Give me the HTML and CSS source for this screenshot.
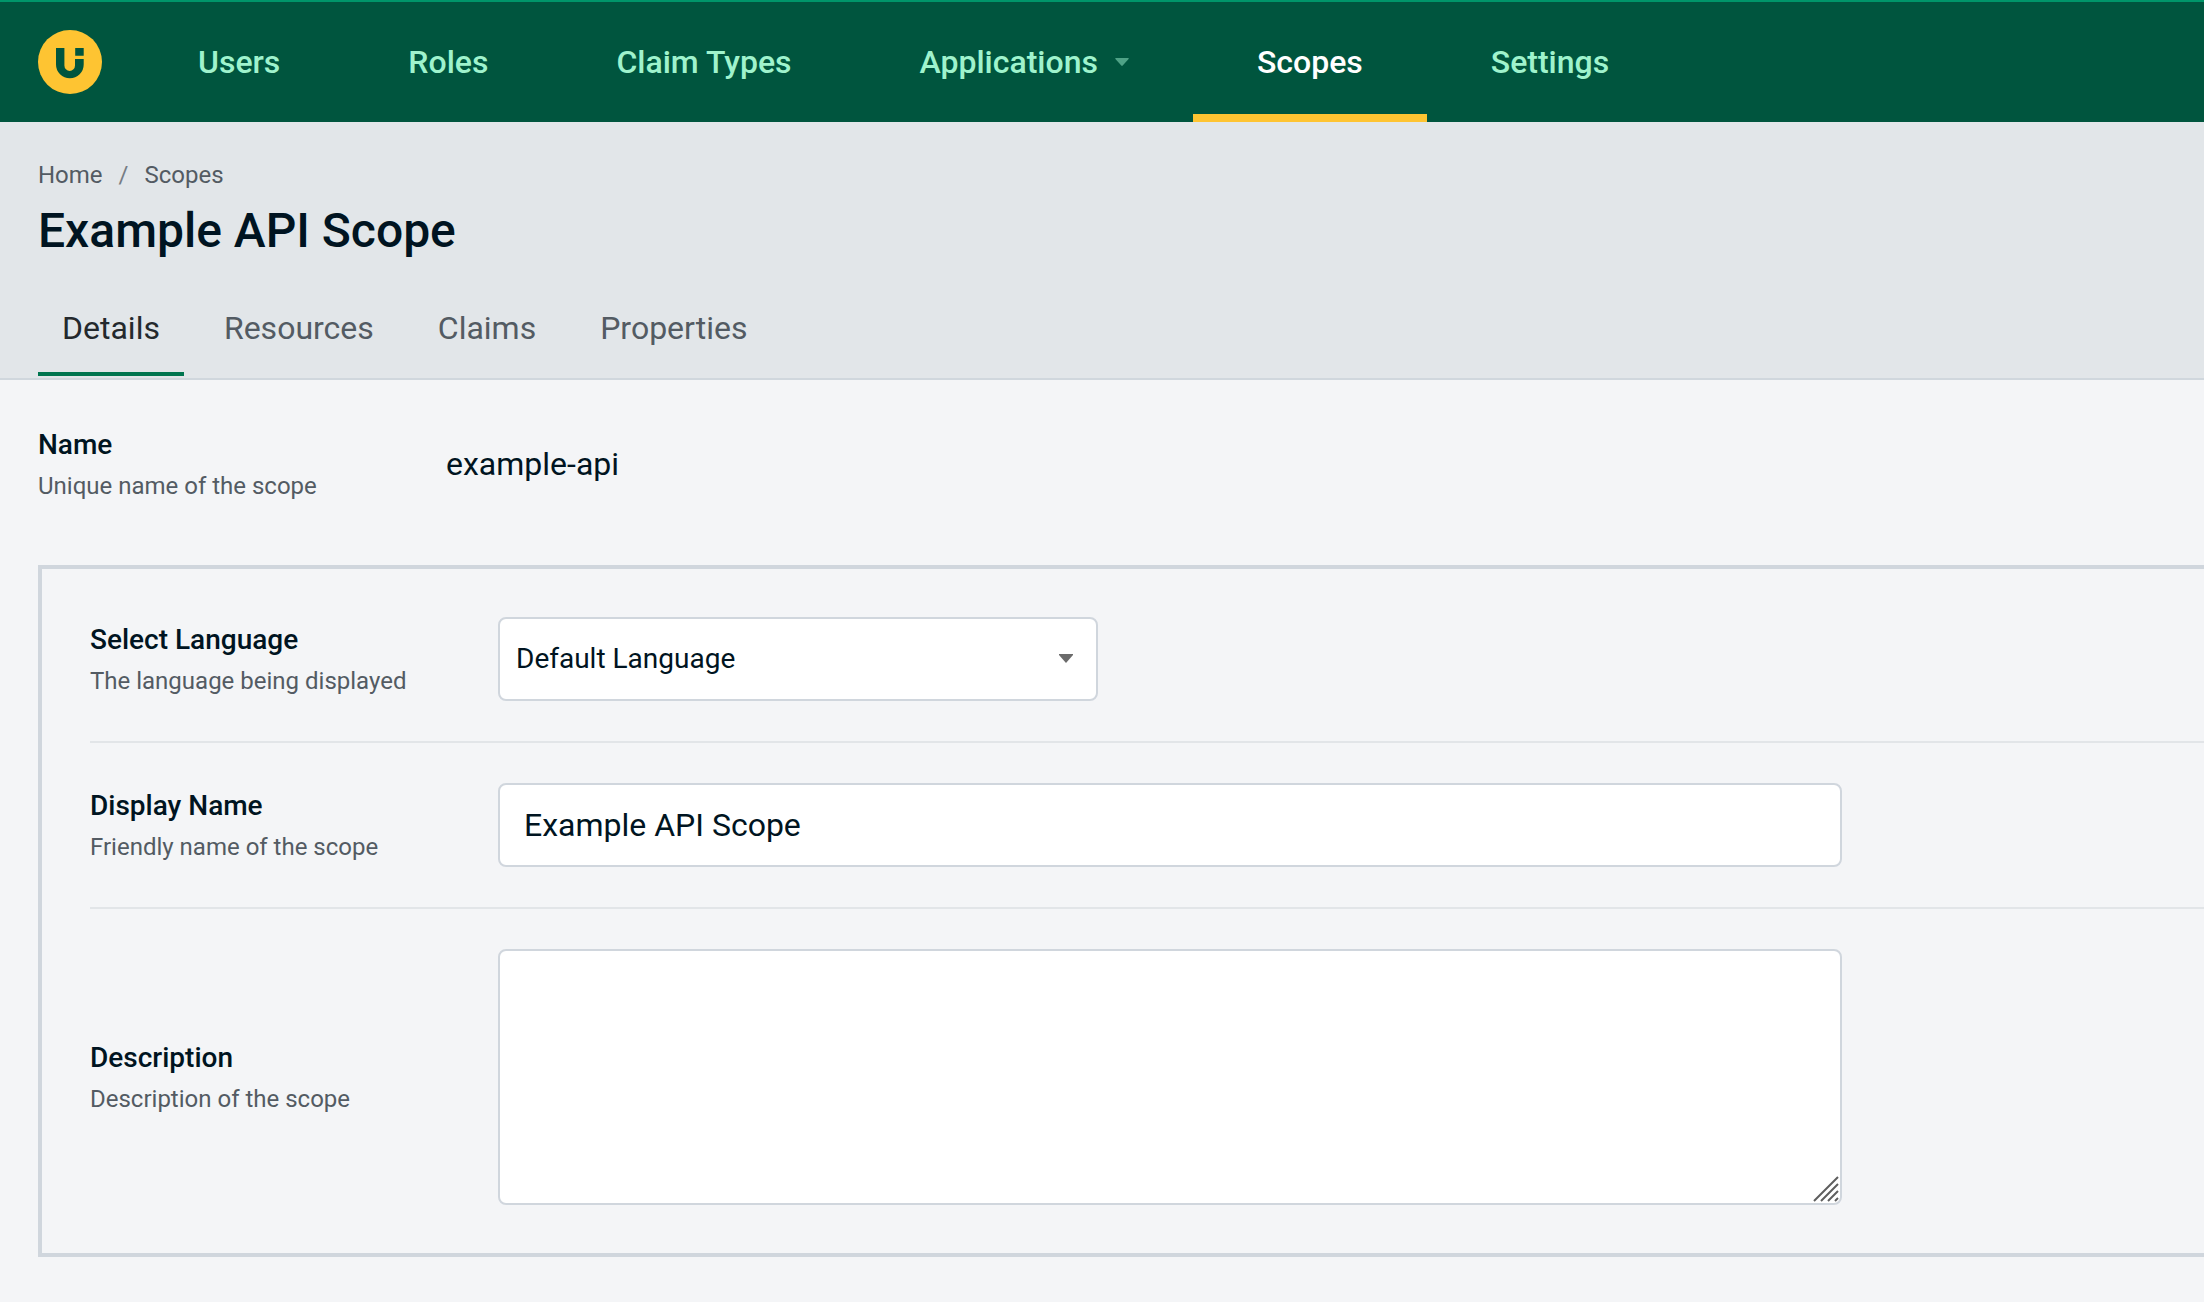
FILE: index.html
```html
<!DOCTYPE html>
<html lang="en">
<head>
<meta charset="utf-8">
<meta name="viewport" content="width=device-width, initial-scale=1">
<title>Example API Scope</title>
<link rel="stylesheet" href="styles.css">
</head>
<body>
<header class="topbar">
  <a class="logo" href="#" aria-label="Home">
    <svg viewBox="0 0 64 64" width="64" height="64" aria-hidden="true">
      <circle class="logo-disc" cx="32" cy="32" r="32"/>
      <path class="logo-mark" d="M18 18h8.4v17.6a5.3 5.3 0 0 0 10.6 0V29h8.7v5.4a13.85 13.85 0 0 1-27.7 0zM37.2 18h8.5v7.7h-8.5z"/>
    </svg>
  </a>
  <nav class="nav" aria-label="Main">
    <a class="nav-link" href="#">Users</a>
    <a class="nav-link" href="#">Roles</a>
    <a class="nav-link" href="#">Claim Types</a>
    <a class="nav-link nav-link-menu" href="#">Applications
      <svg class="nav-caret" viewBox="0 0 14 8" width="14" height="8" aria-hidden="true"><path d="M1 0h12q1.500 0 .6 1L7.700 7.600q-.7.700-1.400 0L.4 1Q-.5 0 1 0z"/></svg>
    </a>
    <a class="nav-link nav-link-active" href="#" aria-current="page">Scopes</a>
    <a class="nav-link" href="#">Settings</a>
  </nav>
</header>

<section class="page-head">
  <nav class="crumbs" aria-label="Breadcrumb">
    <a href="#">Home</a>
    <span class="crumb-sep">/</span>
    <a href="#">Scopes</a>
  </nav>
  <h1 class="title">Example API Scope</h1>
  <nav class="tabs" aria-label="Scope sections">
    <a class="tab tab-active" href="#">Details</a>
    <a class="tab" href="#">Resources</a>
    <a class="tab" href="#">Claims</a>
    <a class="tab" href="#">Properties</a>
  </nav>
</section>

<main class="content">
  <div class="row">
    <div class="caption">
      <span class="label">Name</span>
      <span class="hint">Unique name of the scope</span>
    </div>
    <output class="value">example-api</output>
  </div>

  <form class="panel">
    <div class="row">
      <div class="caption">
        <label class="label" for="language">Select Language</label>
        <span class="hint">The language being displayed</span>
      </div>
      <div class="select-wrap">
        <select class="control select" id="language">
          <option>Default Language</option>
        </select>
        <svg class="select-caret" viewBox="0 0 14 9" width="14" height="9" aria-hidden="true"><path d="M0 0h14v1L7 9 0 1z"/></svg>
      </div>
    </div>
    <div class="row">
      <div class="caption">
        <label class="label" for="display-name">Display Name</label>
        <span class="hint">Friendly name of the scope</span>
      </div>
      <div class="field">
        <input class="control" id="display-name" type="text" value="Example API Scope">
      </div>
    </div>
    <div class="row">
      <div class="caption">
        <label class="label" for="description">Description</label>
        <span class="hint">Description of the scope</span>
      </div>
      <div class="field">
        <textarea class="control textarea" id="description"></textarea>
        <svg class="grip" viewBox="0 0 26 26" width="26" height="26" aria-hidden="true"><path d="M1 25 25 1M8 25 25 8M15 25 25 15M22 25l3-3"/></svg>
      </div>
    </div>
  </form>
</main>
</body>
</html>
```

FILE: styles.css
```css
*,
*::before,
*::after {
  box-sizing: border-box;
}

body {
  margin: 0;
  background: #f4f5f7;
  color: #001421;
  font-family: Roboto, "Liberation Sans", sans-serif;
  font-size: 32px;
  line-height: 40px;
}

a {
  color: inherit;
  text-decoration: none;
}

/* Top bar */

.topbar {
  display: flex;
  align-items: stretch;
  padding-left: 38px;
  border-top: 2px solid #00966a;
  background: #00553e;
}

.logo {
  display: flex;
  align-items: center;
  margin-right: 32px;
}

.logo-disc {
  fill: #fec432;
}

.logo-mark {
  fill: #00553e;
}

.nav {
  display: flex;
}

.nav-link {
  display: flex;
  align-items: center;
  padding: 40px 64px 32px;
  border-bottom: 8px solid transparent;
  color: #9ff3cd;
  font-weight: 500;
}

.nav-link-menu {
  gap: 17px;
}

.nav-caret {
  fill: #4fa286;
}

.nav-link-active {
  border-bottom-color: #fec432;
  color: #fff;
}

/* Page heading */

.page-head {
  padding: 37px 38px 2px;
  border-bottom: 2px solid #d0d7dd;
  background: #e2e6e9;
}

.crumbs {
  display: flex;
  gap: 16px;
  color: #535b63;
  font-size: 24px;
  line-height: 32px;
}

.crumb-sep {
  color: #767d84;
}

.title {
  margin: 8px 0 21px;
  font-size: 48px;
  font-weight: 500;
  line-height: 64px;
}

.tabs {
  display: flex;
  gap: 16px;
}

.tab {
  padding: 24px;
  border-bottom: 4px solid transparent;
  color: #535b63;
}

.tab-active {
  border-bottom-color: #00754f;
  color: #24292d;
}

/* Form */

.content {
  padding: 42px 0 44px 38px;
}

.row {
  display: flex;
  align-items: center;
  min-height: 84px;
}

.caption {
  display: flex;
  flex: 0 0 408px;
  flex-direction: column;
  gap: 1px;
  padding-top: 3px;
}

.label {
  font-size: 28px;
  font-weight: 500;
}

.hint {
  color: #535b63;
  font-size: 24px;
}

.panel {
  margin-top: 59px;
  padding: 48px 0 48px 48px;
  border: 4px solid #d0d6dd;
  border-right: 0;
}

.panel .row + .row {
  margin-top: 40px;
  padding-top: 40px;
  border-top: 2px solid #e2e5e8;
}

.select-wrap,
.field {
  position: relative;
  display: flex;
  flex: 0 1 1344px;
}

.select-wrap {
  flex-basis: 600px;
}

.control {
  display: block;
  width: 100%;
  height: 84px;
  margin: 0;
  padding: 0 24px;
  border: 2px solid #d0d6dd;
  border-radius: 8px;
  background: #fff;
  color: inherit;
  font: inherit;
}

.select {
  padding: 0 16px;
  appearance: none;
  font-size: 28px;
}

.select-caret {
  position: absolute;
  top: 37px;
  right: 25px;
  fill: #6b6b6b;
  pointer-events: none;
}

.textarea {
  height: 256px;
  padding: 20px 24px;
  resize: none;
}

.grip {
  position: absolute;
  right: 3px;
  bottom: 3px;
  fill: none;
  stroke: #5e5e5e;
  stroke-width: 2;
  pointer-events: none;
}
```
